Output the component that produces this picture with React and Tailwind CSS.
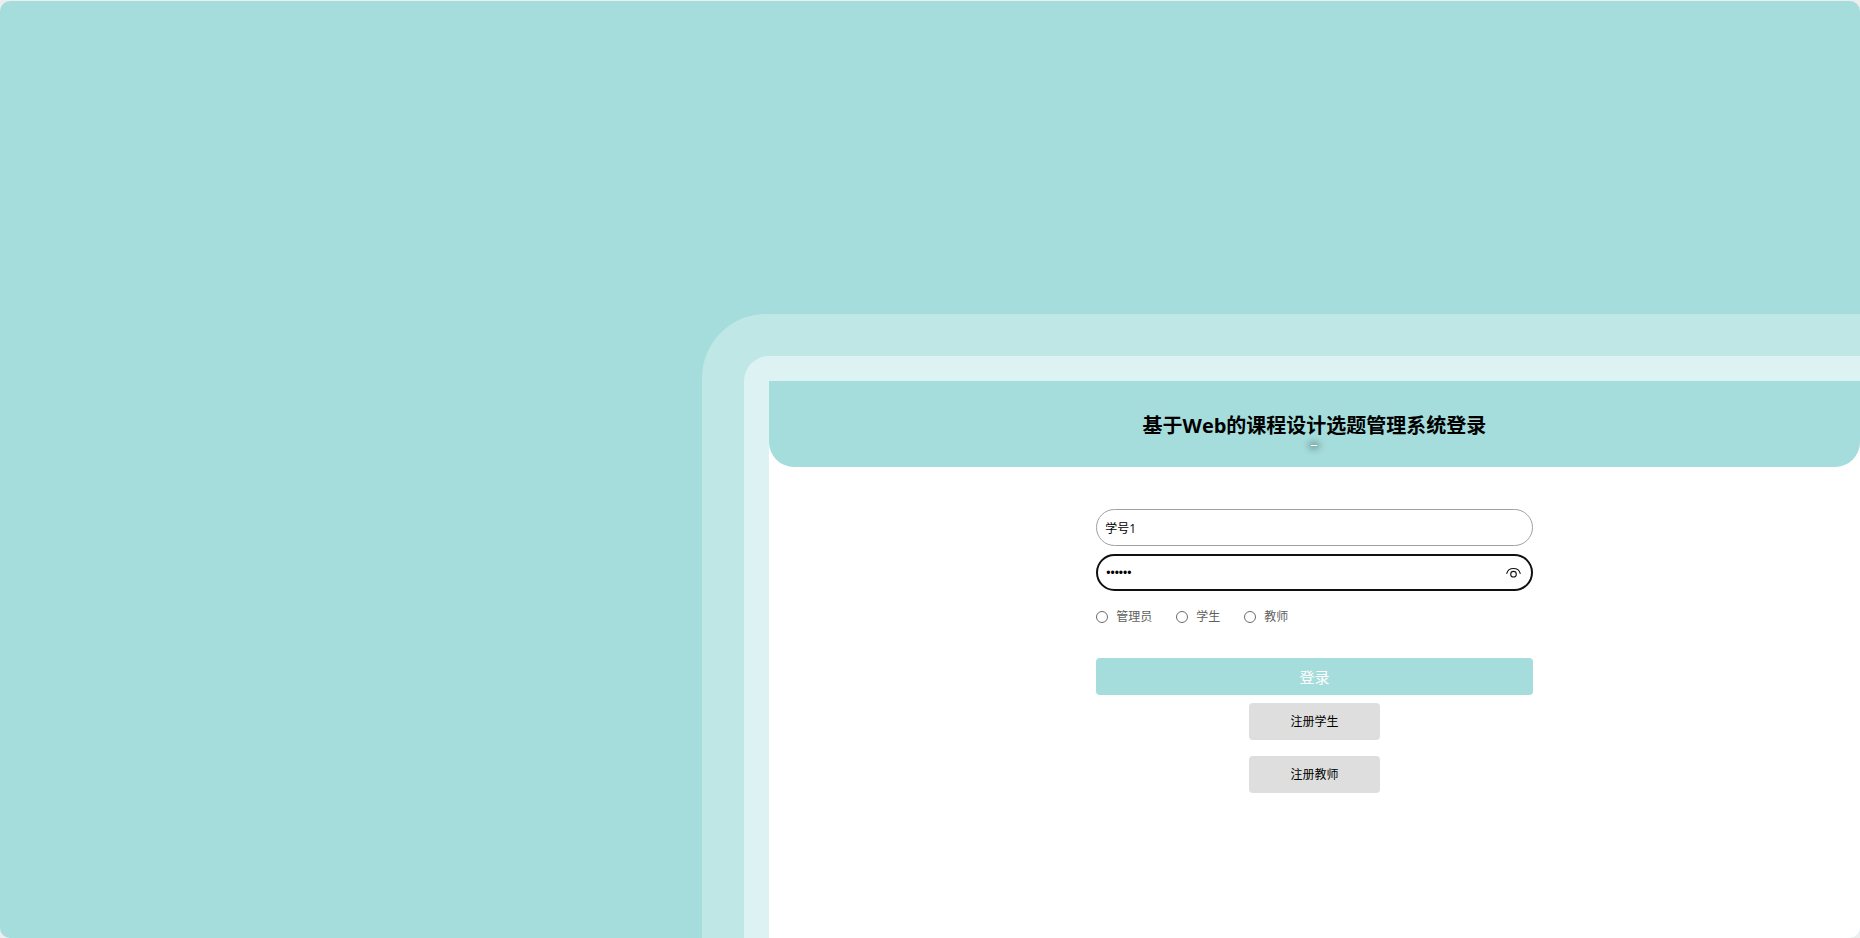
import { useState } from "react";

const ROLES = ["管理员", "学生", "教师"];

function EyeButton({ onClick }) {
  return (
    <button type="button" aria-label="显示密码" onClick={onClick} className="absolute top-1/2 right-3 -translate-y-1/2">
      <svg width="15" height="12" viewBox="0 0 15 12" fill="none" stroke="#111" strokeWidth="1.1" strokeLinecap="round">
        <path d="M.8 6.400C1.600 3.300 4.300 1.500 7.500 1.500s5.900 1.800 6.700 4.900" />
        <circle cx="7.500" cy="7.200" r="2.800" />
      </svg>
    </button>
  );
}

function RoleOption({ label }) {
  return (
    <label className="flex items-center gap-2 text-[#606060]">
      <input
        type="radio"
        name="role"
        value={label}
        className="size-3 appearance-none rounded-full border border-[#6b6b6b] bg-white checked:border-4"
      />
      {label}
    </label>
  );
}

export default function App() {
  const [account, setAccount] = useState("学号1");
  const [password, setPassword] = useState("123456");
  const [visible, setVisible] = useState(false);

  return (
    <div className="min-h-screen bg-[#eeeeee] pt-px font-['Open_Sans','Noto_Sans_CJK_SC',sans-serif] text-xs text-black flex flex-col">
      <main className="flex flex-1 flex-col overflow-hidden rounded-[10px] bg-[#a5dddc] pt-[313px] pl-[37.74%]">
        <div className="flex flex-1 flex-col rounded-tl-[64px] bg-[#bfe7e6] pt-[42px] pl-[42px]">
          <div className="flex flex-1 flex-col rounded-tl-[25px] bg-[#dcf2f3] pt-[25px] pl-[25px]">
            <div className="flex flex-1 flex-col items-center bg-white">
              <header className="flex h-[86px] w-full flex-col items-center rounded-b-[25px] bg-[#a5dddc] pt-8">
                <h1 className="text-xl leading-[26px] font-bold">基于Web的课程设计选题管理系统登录</h1>
                <span className="mt-1.5 h-px w-1.5 bg-white shadow-[0_0_6px_1px_#00000080,0_0_10px_2px_#00000033]" />
              </header>

              <form className="mt-[42px] flex w-2/5 flex-col items-center" onSubmit={(e) => e.preventDefault()}>
                <input
                  type="text"
                  aria-label="账号"
                  value={account}
                  onChange={(e) => setAccount(e.target.value)}
                  className="h-[37px] w-full rounded-[20px] border border-[#a0a0a0] bg-white px-2 outline-none"
                />
                <div className="relative mt-2 w-full">
                  <input
                    type={visible ? "text" : "password"}
                    aria-label="密码"
                    value={password}
                    onChange={(e) => setPassword(e.target.value)}
                    className="block h-[37px] w-full rounded-[20px] border-2 border-[#101010] bg-white pr-9 pl-2 font-['Liberation_Sans',sans-serif] outline-none"
                  />
                  <EyeButton onClick={() => setVisible(!visible)} />
                </div>
                <div className="mt-4 flex h-5 w-full items-center gap-6">
                  {ROLES.map((role) => (
                    <RoleOption key={role} label={role} />
                  ))}
                </div>
                <button type="submit" className="mt-[31px] h-[37px] w-full rounded bg-[#a5dddc] text-[15px] text-white">
                  登录
                </button>
                <button type="button" className="mt-2 h-[37px] w-3/10 rounded bg-[#dedede]">
                  注册学生
                </button>
                <button type="button" className="mt-4 h-[37px] w-3/10 rounded bg-[#dedede]">
                  注册教师
                </button>
              </form>
            </div>
          </div>
        </div>
      </main>
    </div>
  );
}
